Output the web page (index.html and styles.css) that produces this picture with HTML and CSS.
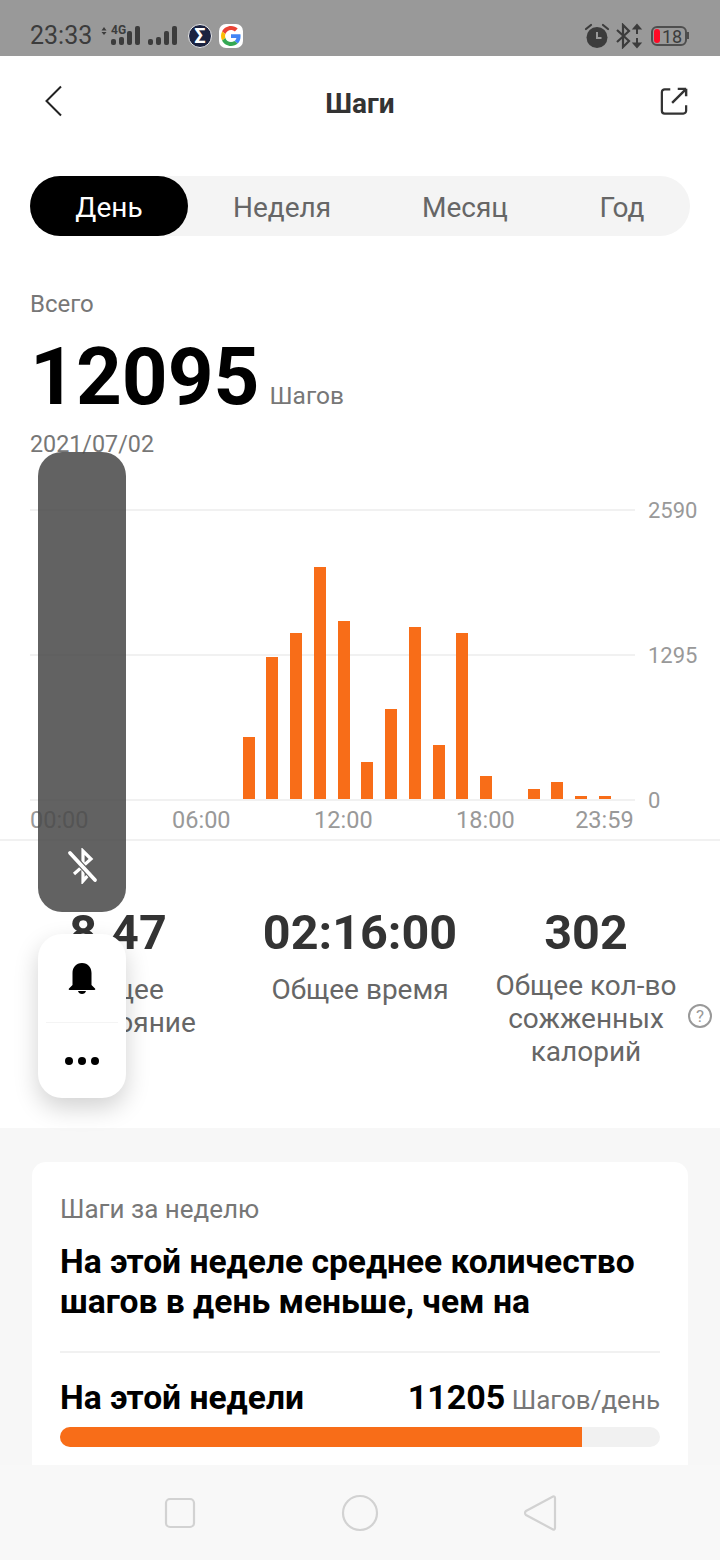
FILE: index.html
```html
<!DOCTYPE html>
<html lang="ru">
<head>
    <meta charset="UTF-8">
    <meta name="viewport" content="width=device-width, initial-scale=1.0">
    <title>Шаги</title>
    <link rel="stylesheet" href="styles.css">
</head>
<body>
    <div class="status-bar">
        <div class="status-left">
            <span class="clock">23:33</span>
            <svg class="signal" width="76" height="26" viewBox="0 0 76 26">
                <path d="M0.500 10.500 3 7 5.500 10.500zM0.500 12 3 15 5.500 12z" fill="#3c3c3c"/>
                <text x="10" y="14" class="net-type">4G</text>
                <rect x="10" y="19" width="5" height="6" rx="2" fill="#3c3c3c"/>
                <rect x="18" y="17" width="5" height="8" rx="2" fill="#3c3c3c"/>
                <rect x="26" y="11" width="5" height="14" rx="2" fill="#3c3c3c"/>
                <rect x="34" y="6" width="5" height="19" rx="2" fill="#3c3c3c"/>
                <rect x="47" y="19" width="5" height="6" rx="2" fill="#3c3c3c"/>
                <rect x="55" y="17" width="5" height="8" rx="2" fill="#3c3c3c"/>
                <rect x="63" y="11" width="5" height="14" rx="2" fill="#3c3c3c"/>
                <rect x="71" y="6" width="5" height="19" rx="2" fill="#3c3c3c"/>
            </svg>
            <span class="app-badge sigma">Σ</span>
            <span class="app-badge google">
                <svg width="20" height="20" viewBox="0 0 48 48">
                    <path fill="#ea4335" d="M24 9.500c3.500 0 6.700 1.200 9.200 3.600l6.900-6.900C35.900 2.400 30.500 0 24 0 14.600 0 6.500 5.400 2.600 13.200l8 6.200C12.400 13.700 17.700 9.500 24 9.500z"/>
                    <path fill="#4285f4" d="M47 24.500c0-1.600-.1-3.100-.4-4.500H24v9h12.900c-.6 3-2.200 5.500-4.700 7.200l7.700 6C44.400 38 47 31.800 47 24.500z"/>
                    <path fill="#fbbc05" d="M10.600 28.600c-.5-1.400-.8-3-.8-4.600s.3-3.200.8-4.600l-8-6.200C.9 16.500 0 20.100 0 24s.9 7.500 2.600 10.800z"/>
                    <path fill="#34a853" d="M24 48c6.500 0 11.900-2.100 15.900-5.800l-7.700-6c-2.200 1.500-4.900 2.300-8.200 2.300-6.300 0-11.600-4.200-13.400-9.900l-8 6.200C6.500 42.600 14.600 48 24 48z"/>
                </svg>
            </span>
        </div>
        <div class="status-right">
            <svg width="26" height="26" viewBox="0 0 26 26">
                <circle cx="13" cy="14.500" r="10.500" fill="#3c3c3c"/>
                <path d="M13 9v6h4.500" fill="none" stroke="#999" stroke-width="2"/>
                <path d="M2 6 7 2M24 6 19 2" stroke="#3c3c3c" stroke-width="2.200" stroke-linecap="round"/>
            </svg>
            <svg width="28" height="26" viewBox="0 0 28 26">
                <path d="M2 7 14 18 8 24V2l6 6L2 19" fill="none" stroke="#3c3c3c" stroke-width="2.200"/>
                <path d="M22 2v9M22 15v9M19 5.500 22 2l3 3.500zM19 20.500l3 3.500 3-3.500z" fill="#3c3c3c" stroke="#3c3c3c" stroke-width="2"/>
            </svg>
            <span class="battery"><span class="battery-level"></span>18</span>
        </div>
    </div>

    <div class="screen">
        <div class="top-bar">
            <svg class="top-icon top-back" width="20" height="32" viewBox="0 0 20 32">
                <path d="M17 1.500 2.500 16 17 30.500" fill="none" stroke="#222" stroke-width="2"/>
            </svg>
            <h1 class="page-title">Шаги</h1>
            <svg class="top-icon top-share" width="28" height="28" viewBox="0 0 30 30">
                <path d="M11 2.500H5a3 3 0 0 0-3 3v20a3 3 0 0 0 3 3h20a3 3 0 0 0 3-3v-6" fill="none" stroke="#333" stroke-width="2.400"/>
                <path d="M28 2v8M13 17 27 3M19 2h9" fill="none" stroke="#333" stroke-width="2.600"/>
            </svg>
        </div>

        <div class="period-tabs">
            <div class="tab tab-active">День</div>
            <div class="tab tab-week">Неделя</div>
            <div class="tab tab-month">Месяц</div>
            <div class="tab tab-year">Год</div>
        </div>

        <div class="summary">
            <div class="muted">Всего</div>
            <div class="total"><span class="total-num">12095</span><span class="total-unit">Шагов</span></div>
            <div class="muted date">2021/07/02</div>
        </div>

        <div class="chart">
            <div class="plot">
                <div class="grid-row"><span class="grid-line"></span><span class="y-label">2590</span></div>
                <div class="grid-row"><span class="grid-line"></span><span class="y-label">1295</span></div>
                <div class="grid-row"><span class="grid-line"></span><span class="y-label">0</span></div>
                <div class="bars" id="bars"></div>
            </div>
            <div class="x-axis">
                <span>00:00</span><span>06:00</span><span>12:00</span><span>18:00</span><span class="x-last">23:59</span>
            </div>
        </div>

        <div class="stats">
            <div class="stat stat-dist">
                <div class="stat-num">8.47</div>
                <div class="stat-label">Общее<br>расстояние</div>
            </div>
            <div class="stat">
                <div class="stat-num">02:16:00</div>
                <div class="stat-label">Общее время</div>
            </div>
            <div class="stat stat-cal">
                <div class="stat-num">302</div>
                <div class="stat-label">Общее кол-во<br>сожженных<br>калорий</div>
                <span class="help">?</span>
            </div>
        </div>

        <div class="lower">
            <div class="card">
                <div class="card-label">Шаги за неделю</div>
                <div class="card-title">На этой неделе среднее количество шагов в день меньше, чем на</div>
                <div class="card-row">
                    <span class="row-name">На этой недели</span>
                    <span class="row-value"><b>11205</b> Шагов/день</span>
                </div>
                <div class="progress"><div class="progress-fill"></div></div>
            </div>
        </div>
    </div>

    <div class="nav-bar">
        <svg width="32" height="32" viewBox="0 0 32 32"><rect x="2" y="2" width="28" height="28" rx="4" fill="none" stroke="#d2d2d2" stroke-width="2.200"/></svg>
        <svg width="38" height="38" viewBox="0 0 38 38"><circle cx="19" cy="19" r="17" fill="none" stroke="#d2d2d2" stroke-width="2.200"/></svg>
        <svg width="34" height="38" viewBox="0 0 34 38"><path d="M30 2.500a1.500 1.500 0 0 1 2 1.500v30a1.500 1.500 0 0 1-2 1.500L3 21a2.500 2.500 0 0 1 0-4z" fill="none" stroke="#d2d2d2" stroke-width="2.200"/></svg>
    </div>

    <!-- Floating side panel -->
    <div class="float-dark">
        <svg width="34" height="36" viewBox="0 0 34 36">
            <path d="M9 26 26 11 18 3V33L25 25 9 10" fill="none" stroke="#fff" stroke-width="3.200"/>
            <path d="M5 5 30 32" stroke="#606060" stroke-width="6"/>
            <path d="M5 5 30 32" stroke="#fff" stroke-width="3.800" stroke-linecap="round"/>
        </svg>
    </div>
    <div class="float-light">
        <div class="float-btn">
            <svg width="30" height="32" viewBox="0 0 30 32">
                <path d="M15 1c-6 0-9.500 4.500-9.500 10v12L2 26.500c-.6.6-.3 1.500.6 1.500h24.800c.9 0 1.200-.9.600-1.500L24.500 23V11C24.500 5.500 21 1 15 1zM11 29c.5 2 2 3 4 3s3.500-1 4-3z" fill="#000"/>
            </svg>
        </div>
        <div class="float-btn float-more"><i></i><i></i><i></i></div>
    </div>

    <script>
        // Hourly steps, pixel height of each bar (0 = no bar)
        const hours = [0, 0, 0, 0, 0, 0, 0, 0, 62, 142, 166, 232, 178, 37, 90, 172, 54, 166, 23, 0, 10, 17, 3, 3];
        const bars = document.getElementById('bars');
        hours.forEach(h => {
            const bar = document.createElement('div');
            bar.className = 'bar';
            bar.style.height = h + 'px';
            bars.appendChild(bar);
        });
    </script>
</body>
</html>
```
FILE: styles.css
```css
* {
    box-sizing: border-box;
}
html, body {
    height: 100%;
}
body {
    margin: 0;
    overflow: hidden;
    position: relative;
    display: flex;
    flex-direction: column;
    background: #fff;
    font-family: Roboto, "Noto Sans", sans-serif;
    color: #000;
}
.status-bar {
    height: 56px;
    flex: none;
    background: #999;
    display: flex;
    justify-content: space-between;
    align-items: center;
    padding: 16px 33px 0 30px;
}
.status-left, .status-right {
    display: flex;
    align-items: center;
}
.clock {
    font-size: 25px;
    line-height: 30px;
    color: #3c3c3c;
    width: 71px;
}
.signal {
    margin-top: -6px;
}
.net-type {
    font-family: Roboto, sans-serif;
    font-size: 12px;
    font-weight: 700;
    fill: #3c3c3c;
}
.app-badge {
    width: 24px;
    height: 24px;
    display: flex;
    align-items: center;
    justify-content: center;
}
.sigma {
    margin-left: 11px;
    border-radius: 50%;
    background: #1a2240;
    border: 1px solid #eee;
    color: #fff;
    font-size: 20px;
    font-weight: 700;
}
.google {
    margin-left: 7px;
    border-radius: 7px;
    background: #fff;
}
.status-right svg {
    margin-right: 5px;
}
.battery {
    position: relative;
    width: 36px;
    height: 20px;
    border: 2px solid #4e4e4e;
    border-radius: 6px;
    font-size: 18px;
    line-height: 17px;
    color: #3c3c3c;
    padding-left: 9px;
    margin-left: 3px;
}
.battery::after {
    content: "";
    position: absolute;
    right: -4px;
    top: 4px;
    width: 2px;
    height: 7px;
    background: #4e4e4e;
}
.battery-level {
    position: absolute;
    left: 1px;
    top: 1px;
    width: 6px;
    height: 14px;
    border-radius: 3px;
    background: #ff0a26;
}
.screen {
    flex: 1;
    min-height: 0;
    overflow: hidden;
    display: flex;
    flex-direction: column;
}
.top-bar {
    height: 94px;
    flex: none;
    display: grid;
    grid-template-columns: 1fr auto 1fr;
    align-items: center;
    padding: 0 32px;
}
.top-icon {
    margin-top: -4px;
}
.top-back {
    margin-left: 12px;
}
.top-share {
    justify-self: end;
}
.page-title {
    margin: 0;
    font-size: 28px;
    font-weight: 700;
    color: #333;
}
.period-tabs {
    margin: 26px 30px 0;
    height: 60px;
    flex: none;
    border-radius: 30px;
    background: #f4f4f4;
    display: flex;
    align-items: center;
    font-size: 28px;
    color: #666;
}
.tab {
    text-align: center;
    line-height: 64px;
    height: 60px;
}
.tab-active {
    width: 158px;
    border-radius: 30px;
    background: #000;
    color: #fff;
}
.tab-week {
    width: 188px;
}
.tab-month {
    width: 178px;
}
.tab-year {
    width: 136px;
}
.summary {
    padding: 54px 30px 0;
    flex: none;
}
.muted {
    font-size: 24px;
    line-height: 28px;
    color: #777;
}
.total {
    display: flex;
    align-items: baseline;
    height: 88px;
    margin-top: 15px;
}
.total-num {
    font-size: 80px;
    line-height: 88px;
    font-weight: 700;
    margin-right: 10px;
}
.total-unit {
    font-size: 24.500px;
    color: #777;
}
.date {
    font-size: 23.300px;
    margin-top: 9px;
}
.chart {
    padding: 0 0 0 30px;
    flex: none;
}
.plot {
    position: relative;
    height: 347px;
    padding-top: 51px;
}
.grid-row {
    height: 145px;
    display: flex;
    align-items: flex-start;
}
.grid-line {
    width: 605px;
    height: 2px;
    background: #f1f1f1;
}
.y-label {
    font-size: 22px;
    line-height: 26px;
    color: #999;
    margin: -11px 0 0 13px;
}
.bars {
    position: absolute;
    left: 0;
    top: 51px;
    width: 605px;
    height: 290px;
    padding-left: 22.500px;
    display: flex;
    align-items: flex-end;
    gap: 11.750px;
}
.bar {
    width: 12px;
    flex: none;
    background: #f86d18;
}
.x-axis {
    height: 34px;
    display: flex;
    gap: 83.500px;
    font-size: 23.500px;
    line-height: 30px;
    color: #999;
}
.x-last {
    margin-left: -23px;
}
.stats {
    flex: none;
    height: 289px;
    border-top: 2px solid #f1f1f1;
    display: grid;
    grid-template-columns: 240px 240px 240px;
    padding-top: 64px;
}
.stat {
    position: relative;
    text-align: center;
}
.stat-num {
    font-size: 48.500px;
    line-height: 56px;
    font-weight: 700;
    color: #333;
}
.stat-dist .stat-num {
    padding-right: 4px;
}
.stat-label {
    font-size: 28px;
    line-height: 33px;
    color: #666;
    margin-top: 12px;
}
.stat-cal {
    padding-right: 28px;
}
.stat-cal .stat-label {
    margin-top: 8px;
}
.help {
    position: absolute;
    right: 8px;
    top: 99px;
    width: 24px;
    height: 24px;
    border: 2px solid #999;
    border-radius: 50%;
    font-size: 17px;
    line-height: 20px;
    color: #999;
    text-align: center;
}
.lower {
    flex: 1;
    min-height: 0;
    overflow: hidden;
    background: #f7f7f7;
    padding: 34px 32px 0;
}
.card {
    background: #fff;
    border-radius: 14px 14px 0 0;
    padding: 33px 28px 40px;
}
.card-label {
    font-size: 26px;
    line-height: 28px;
    color: #777;
}
.card-title {
    font-size: 33.600px;
    line-height: 40px;
    font-weight: 700;
    margin-top: 19px;
    padding-bottom: 29px;
    border-bottom: 2px solid #f1f1f1;
}
.card-row {
    display: flex;
    justify-content: space-between;
    align-items: baseline;
    margin-top: 24px;
}
.row-name {
    font-size: 33.600px;
    font-weight: 700;
}
.row-value {
    font-size: 26px;
    color: #777;
}
.row-value b {
    font-size: 34px;
    color: #000;
}
.progress {
    height: 20px;
    margin-top: 10px;
    border-radius: 10px;
    overflow: hidden;
    background: #f1f1f1;
}
.progress-fill {
    width: 522px;
    height: 20px;
    background: #f86d18;
}
.nav-bar {
    height: 95px;
    flex: none;
    background: #f8f8f8;
    display: flex;
    align-items: center;
    padding: 0 163px 0 164px;
    justify-content: space-between;
}
.float-dark {
    position: absolute;
    left: 38px;
    top: 452px;
    width: 88px;
    height: 460px;
    border-radius: 24px;
    background: rgba(72, 72, 72, 0.86);
    display: flex;
    align-items: flex-end;
    justify-content: center;
    padding-bottom: 28px;
}
.float-light {
    position: absolute;
    left: 38px;
    top: 934px;
    width: 88px;
    height: 164px;
    border-radius: 24px;
    background: #fff;
    box-shadow: 0 10px 24px rgba(0, 0, 0, 0.18);
}
.float-btn {
    height: 88px;
    display: flex;
    align-items: center;
    justify-content: center;
}
.float-more {
    gap: 5px;
    border-top: 1px solid #f4f4f4;
    margin: 0 8px;
    height: 76px;
}
.float-more i {
    width: 8px;
    height: 8px;
    border-radius: 50%;
    background: #000;
}
```
